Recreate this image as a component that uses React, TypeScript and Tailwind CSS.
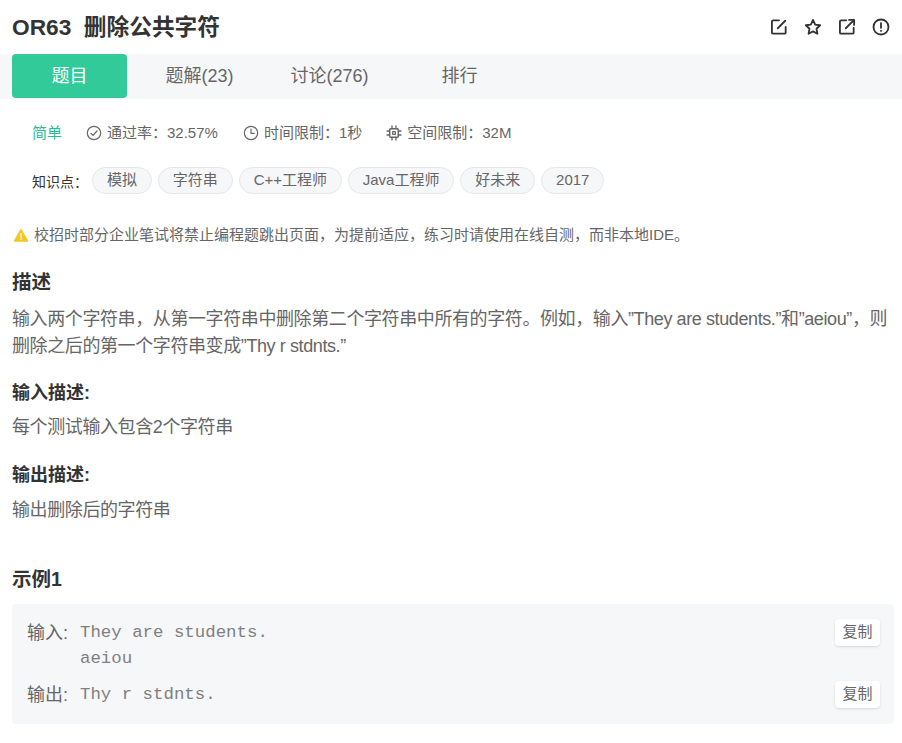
import React from 'react';

const sans = "font-['Liberation_Sans','Noto_Sans_CJK_SC',sans-serif]";

const tags = ['模拟', '字符串', 'C++工程师', 'Java工程师', '好未来', '2017'];
const tabs = ['题解(23)', '讨论(276)', '排行'];

const Icon: React.FC<{ children: React.ReactNode; size?: number }> = ({ children, size = 20 }) => (
  <svg width={size} height={size} viewBox="0 0 24 24" fill="none" stroke="currentColor" strokeWidth="2.2" strokeLinecap="round" strokeLinejoin="round">
    {children}
  </svg>
);

const App: React.FC = () => {
  return (
    <div className={`${sans} w-[902px] h-[743px] overflow-hidden bg-white text-[#333]`}>
      <div className="flex items-center justify-between h-[54px] pl-3 pr-[11px]">
        <h1 className="pt-px text-[22.7px] font-bold">OR63&nbsp;&nbsp;删除公共字符</h1>
        <div className="flex items-center gap-3.5">
          <Icon>
            <path d="M12 4H5a1.5 1.5 0 0 0-1.5 1.5v13A1.5 1.5 0 0 0 5 20h13.5a1.5 1.5 0 0 0 1.5-1.5V12" />
            <path d="M19.5 4.5 10.5 13.5" />
          </Icon>
          <Icon>
            <path d="m12 3.5 2.6 5.6 6 .8-4.4 4.2 1.1 6L12 17.2l-5.3 2.9 1.1-6-4.4-4.2 6-.8z" />
          </Icon>
          <Icon>
            <path d="M11 4H5a1.5 1.5 0 0 0-1.5 1.5v13A1.5 1.5 0 0 0 5 20h13.5a1.5 1.5 0 0 0 1.5-1.5V13" />
            <path d="M10.5 13.5 20 4" />
            <path d="M14.5 3.5h6v6" />
          </Icon>
          <Icon>
            <circle cx="12" cy="12" r="9" />
            <path d="M12 7.5v5.5" />
            <path d="M12 16.5v.2" />
          </Icon>
        </div>
      </div>

      <div className="flex gap-[15px] h-[45px] px-3 bg-[#f6f7f9] text-[18px] text-[#666]">
        <div className="flex items-center justify-center w-[115px] h-11 rounded bg-[#32ca99] text-white">题目</div>
        {tabs.map((t) => (
          <div key={t} className="flex items-center justify-center w-[115px] h-11">{t}</div>
        ))}
      </div>

      <div className="flex items-center h-5 mt-6 ml-8 text-[15px] text-[#666]">
        <span className="text-[#25bb9b] mr-[24px]">简单</span>
        <span className="flex items-center gap-[5px] mr-[25px]">
          <Icon size={16}>
            <circle cx="12" cy="12" r="10" strokeWidth="1.8" />
            <path d="m7.5 12.5 3 3 6-6.5" strokeWidth="1.8" />
          </Icon>
          通过率：32.57%
        </span>
        <span className="flex items-center gap-[5px] mr-[24px]">
          <Icon size={16}>
            <circle cx="12" cy="12" r="10" strokeWidth="1.8" />
            <path d="M12 6v6.5h5" strokeWidth="1.8" />
          </Icon>
          时间限制：1秒
        </span>
        <span className="flex items-center gap-[5px]">
          <Icon size={16}>
            <rect x="5.5" y="5.5" width="13" height="13" rx="1.5" strokeWidth="2.2" />
            <rect x="10" y="10" width="4" height="4" strokeWidth="1.8" />
            <path d="M9 1.5v4M15 1.5v4M9 18.5v4M15 18.5v4M1.5 9h4M1.5 15h4M18.5 9h4M18.5 15h4" strokeWidth="2" />
          </Icon>
          空间限制：32M
        </span>
      </div>

      <div className="flex items-center h-[27px] mt-[24px] ml-8">
        <span className="w-[60px] text-sm mt-[3px]">知识点：</span>
        <div className="flex gap-[5.8px] text-[15px]">
          {tags.map((t) => (
            <span key={t} className="flex items-center h-[27px] px-3.5 rounded-full bg-[#f6f7f9] border border-[#e4e6e9] text-[#666] pb-[1px]">{t}</span>
          ))}
        </div>
      </div>

      <div className="flex items-center gap-[5px] h-5 mt-[31px] ml-[13px] text-[15px] text-[#666]">
        <svg width="16" height="16" viewBox="0 0 24 24" fill="#f5c623">
          <path d="M12 4 22 21H2z" stroke="#f5c623" strokeWidth="2" strokeLinejoin="round" />
          <path d="M12 10v5.5M12 18v.5" stroke="#fff" strokeWidth="2" strokeLinecap="round" />
        </svg>
        校招时部分企业笔试将禁止编程题跳出页面，为提前适应，练习时请使用在线自测，而非本地IDE。
      </div>

      <div className="pl-3 pr-2">
        <h2 className="mt-[25px] text-[19.5px] font-bold leading-6">描述</h2>
        <p className="mt-[12px] text-[18px] leading-[27px] tracking-[-0.4px] text-[#666]">
          输入两个字符串，从第一字符串中删除第二个字符串中所有的字符。例如，输入”They are students.”和”aeiou”，则删除之后的第一个字符串变成”Thy r stdnts.”
        </p>
        <h3 className="mt-[21px] text-[18px] font-bold leading-6">输入描述:</h3>
        <p className="mt-[10px] text-[18px] leading-6 tracking-[-0.4px] text-[#666]">每个测试输入包含2个字符串</p>
        <h3 className="mt-[24px] text-[18px] font-bold leading-6">输出描述:</h3>
        <p className="mt-[11px] text-[18px] leading-6 tracking-[-0.4px] text-[#666]">输出删除后的字符串</p>
        <h2 className="mt-[45px] text-[19.5px] font-bold leading-6">示例1</h2>

        <div className="flex flex-col gap-[10px] mt-[13px] h-[120px] pt-[16px] pl-[15px] pr-[14px] rounded bg-[#f6f7f9] text-[#666]">
          <div className="flex items-start justify-between">
            <div className="flex">
              <span className="w-[53px] text-[18px] leading-[26px]">输入:</span>
              <pre className="font-['Liberation_Mono',monospace] text-[17.4px] leading-[26px] text-[#808080]">{'They are students.\naeiou'}</pre>
            </div>
            <button className="w-[45px] h-[27px] -mt-px rounded-sm bg-white text-[15px] shadow-sm">复制</button>
          </div>
          <div className="flex items-start justify-between">
            <div className="flex">
              <span className="w-[53px] text-[18px] leading-[26px]">输出:</span>
              <pre className="font-['Liberation_Mono',monospace] text-[17.4px] leading-[26px] text-[#808080]">Thy r stdnts.</pre>
            </div>
            <button className="w-[45px] h-[27px] -mt-px rounded-sm bg-white text-[15px] shadow-sm">复制</button>
          </div>
        </div>
      </div>
    </div>
  );
};

export default App;
